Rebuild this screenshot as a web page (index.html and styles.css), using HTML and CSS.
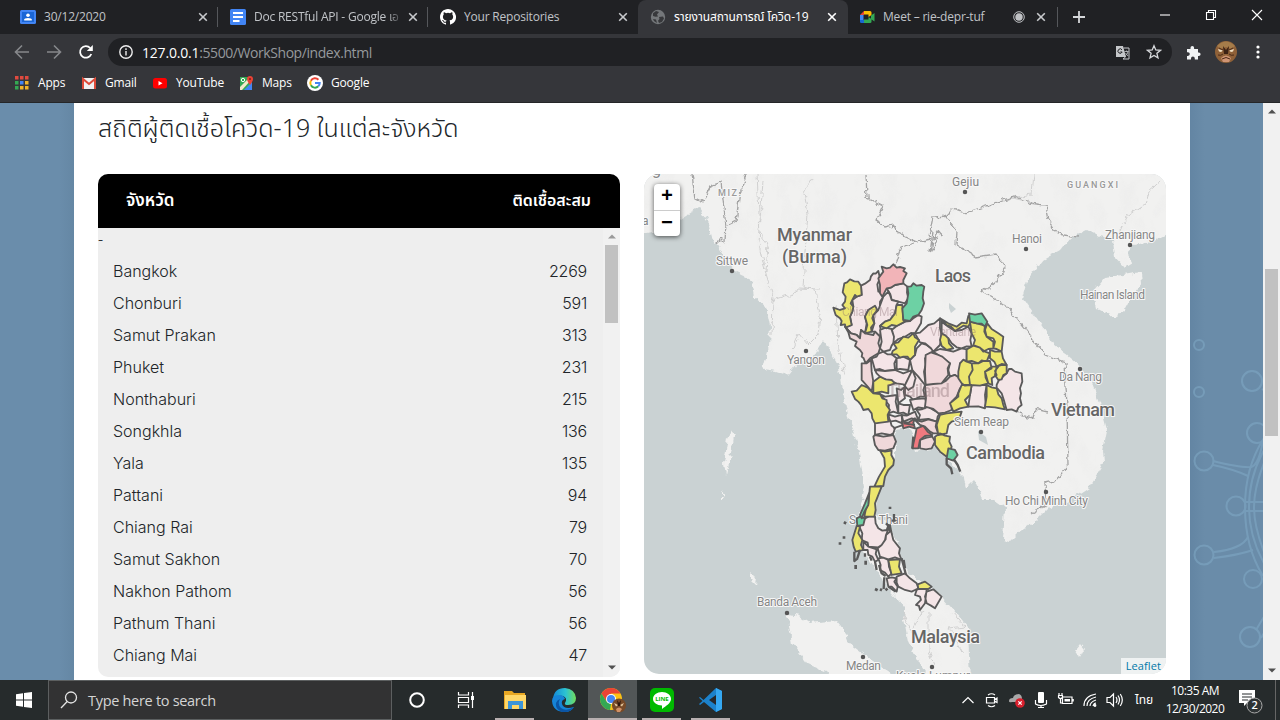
FILE: index.html
```html
<!DOCTYPE html>
<html lang="th">
<head>
<meta charset="utf-8">
<title>รายงานสถานการณ์ โควิด-19</title>
<link rel="stylesheet" href="styles.css">
</head>
<body>
<div class="desktop">
<header class="browser">
  <div class="tabstrip">
    <div class="tab"><svg class="fav" viewBox="0 0 16 16"><rect y="1" width="16" height="14" rx="1.5" fill="#4285f4"/><rect x="2" y="3" width="12" height="10" fill="#1a66d6"/><circle cx="8" cy="6.3" r="1.8" fill="#fff"/><path d="M4.2 11.5v-1q0-1.6 3.8-1.6t3.8 1.6v1z" fill="#fff"/></svg><span class="tab-title">30/12/2020</span><svg class="x" viewBox="0 0 10 10"><path d="M1.2 1.2 8.8 8.8M8.8 1.2 1.2 8.8"/></svg></div>
    <div class="tab"><svg class="fav" viewBox="0 0 16 16"><rect width="16" height="16" rx="1.5" fill="#4285f4"/><path d="M3 4h10M3 8h10M3 12h6.5" stroke="#fff" stroke-width="1.8"/></svg><span class="tab-title fade t2">Doc RESTful API - Google เอ</span><svg class="x" viewBox="0 0 10 10"><path d="M1.2 1.2 8.8 8.8M8.8 1.2 1.2 8.8"/></svg></div>
    <div class="tab no-sep"><svg class="fav" viewBox="0 0 16 16"><path fill="#fff" d="M8 0C3.58 0 0 3.58 0 8c0 3.54 2.29 6.53 5.47 7.59.4.07.55-.17.55-.38v-1.49c-2.01.37-2.53-.49-2.69-.94-.09-.23-.48-.94-.82-1.13-.28-.15-.68-.52-.01-.53.63-.01 1.08.58 1.23.82.72 1.21 1.87.87 2.33.66.07-.52.28-.87.51-1.07-1.78-.2-3.64-.89-3.64-3.95 0-.87.31-1.59.82-2.15-.08-.2-.36-1.02.08-2.12 0 0 .67-.21 2.2.82a7.7 7.7 0 0 1 4 0c1.53-1.04 2.2-.82 2.2-.82.44 1.1.16 1.92.08 2.12.51.56.82 1.27.82 2.15 0 3.07-1.87 3.75-3.65 3.95.29.25.54.73.54 1.48v2.2c0 .21.15.46.55.38A8 8 0 0 0 8 0z"/></svg><span class="tab-title">Your Repositories</span><svg class="x" viewBox="0 0 10 10"><path d="M1.2 1.2 8.8 8.8M8.8 1.2 1.2 8.8"/></svg></div>
    <div class="tab active"><svg class="fav" viewBox="0 0 16 16"><circle cx="8" cy="8" r="7.2" fill="#74777a"/><path d="M3 4.2 6 2l3 1-2 2.5 1 2-2.5.2L3 7zM9 8l4-.5 1 2-2 3.5-3 1-1-2.2 1.5-1.8zM3 10l3 .5 1 3.5-3-2z" fill="#37383b"/></svg><span class="tab-title thai">รายงานสถานการณ์ โควิด-19</span><svg class="x" viewBox="0 0 10 10"><path d="M1.2 1.2 8.8 8.8M8.8 1.2 1.2 8.8"/></svg></div>
    <div class="tab meet"><svg class="fav" viewBox="0 0 16 16"><path d="M1 6 5 2v4z" fill="#ea4335"/><path d="M5 2h6q1.5 0 1.5 1.5V6L9.500 8V5.500H5z" fill="#fbbc04"/><path d="M1 6h3.500v5H1z" fill="#4285f4"/><path d="M1 11h4v3H2.200Q1 14 1 12.800z" fill="#1967d2"/><path d="M5 10.500h4.500V8l3 2v2.700q0 1.300-1.500 1.300H5zM12 6.500l3.500-2.500v8.500L12 10z" fill="#34a853"/></svg><span class="tab-title">Meet – rie-depr-tuf</span><svg class="rec" viewBox="0 0 12 12"><circle cx="6" cy="6" r="5.300" fill="none" stroke="#bfc1c4"/><circle cx="6" cy="6" r="3.700" fill="#bfc1c4"/></svg><svg class="x" viewBox="0 0 10 10"><path d="M1.200 1.200 8.800 8.800M8.800 1.200 1.200 8.800"/></svg></div>
    <svg class="plus" viewBox="0 0 12 12"><path d="M6 0v12M0 6h12"/></svg>
    <div class="winctl">
      <svg viewBox="0 0 12 12"><path d="M1 6h10"/></svg>
      <svg viewBox="0 0 12 12"><path d="M1.500 3.500h7v7h-7zM3.500 3.500v-2h7v7h-2"/></svg>
      <svg viewBox="0 0 12 12"><path d="m1 1 10 10M11 1 1 11"/></svg>
    </div>
  </div>
  <div class="toolbar">
    <svg class="nav dim" viewBox="0 0 16 16"><path d="M15 8H2M8 1.500 1.500 8 8 14.500"/></svg>
    <svg class="nav dim" viewBox="0 0 16 16"><path d="M1 8h13M8 1.500 14.500 8 8 14.500"/></svg>
    <svg class="nav reload" viewBox="0 0 16 16"><path d="M13.300 10A5.800 5.800 0 1 1 12.200 4"/><path d="M14.800 1v6h-6z" class="solid"/></svg>
    <div class="omnibox">
      <svg class="info" viewBox="0 0 14 14"><circle cx="7" cy="7" r="6.200"/><path d="M7 6v4.500M7 3.300v1.600"/></svg>
      <span class="url"><b>127.0.0.1</b>:5500/WorkShop/index.html</span>
      <svg class="translate" viewBox="0 0 15 15"><path d="M1 1h7l3 11H1z" fill="#c5c7ca"/><path d="M8.500 3H14v11H8l2.500-2" fill="none" stroke="#c5c7ca"/><path d="M7 4.800A2.200 2.200 0 1 0 7.200 7H5.300" fill="none" stroke="#202124"/><path d="M9.500 6.500h4M11.500 5.500v1M13 6.500q-.5 3-2.500 4M10.500 8l2.500 3" fill="none" stroke="#c5c7ca" stroke-width=".8"/></svg>
      <svg class="star" viewBox="0 0 16 16"><path d="m8 1.700 1.800 4.200 4.700.4-3.600 3 1.100 4.600-4-2.500-4 2.500 1.100-4.600-3.600-3 4.700-.4z"/></svg>
    </div>
    <svg class="puzzle" viewBox="0 0 15 15"><path d="M1 4h3.500V2.800a1.800 1.800 0 0 1 3.600 0V4H12v3.500h.8a1.800 1.800 0 0 1 0 3.600H12V14.500H8.800v-1a1.900 1.900 0 0 0-3.800 0v1H1v-3.600h1a1.800 1.800 0 0 0 0-3.600H1z"/></svg>
    <svg class="avatar" viewBox="0 0 22 22"><circle cx="11" cy="11" r="11" fill="#8f6138"/><path d="M2 5q9-9 18 0l-4 3-5-2-5 2z" fill="#a57c4a"/><path d="m8 5 3 4 3-4-1 8H9z" fill="#3b2114"/><path d="m3 8 5 1.500-2 1.500-2-.5zM19 8l-5 1.500 2 1.500 2-.5z" fill="#f0dfc2"/><path d="M6 17q5-5 10 0l-2 4H8z" fill="#cf9474"/><path d="M7 18q4-3 8 0M3 14q3 1 5-1M19 14q-3 1-5-1M4 7l4 2M18 7l-4 2" stroke="#4c2a18" fill="none"/></svg>
    <svg class="dots" viewBox="0 0 4 14"><circle cx="2" cy="2" r="1.600"/><circle cx="2" cy="7" r="1.600"/><circle cx="2" cy="12" r="1.600"/></svg>
  </div>
  <nav class="bookmarks">
    <span class="bm apps"><svg viewBox="0 0 14 14"><path d="M0 0h3.500v3.500H0zM5 0h3.500v3.500H5zM10 0h3.500v3.500H10z" fill="#e04a3f"/><path d="M0 5h3.500v3.500H0z" fill="#34a853"/><path d="M5 5h3.500v3.500H5z" fill="#4285f4"/><path d="M10 5h3.500v3.500H10zM5 10h3.500v3.500H5zM10 10h3.500v3.500H10z" fill="#f0b42a"/><path d="M0 10h3.500v3.500H0z" fill="#34a853"/></svg>Apps</span>
    <span class="bm gmail"><svg viewBox="0 0 14 14"><rect y="2" width="14" height="11" rx="1" fill="#f1f1f1"/><path d="M1 13V3l6 5 6-5v10" fill="none" stroke="#dd4b39" stroke-width="2"/></svg>Gmail</span>
    <span class="bm yt"><svg viewBox="0 0 14 14"><rect y="2" width="14" height="10.500" rx="2.500" fill="#f00"/><path d="m5.500 5 4 2.200-4 2.200z" fill="#fff"/></svg>YouTube</span>
    <span class="bm maps"><svg viewBox="0 0 14 14"><path d="M1 1h12v13H1z" fill="#34a853"/><path d="M5 14 13 6v8z" fill="#4285f4"/><path d="M1 11 10 2l2 2L3 14H1z" fill="#f3e9c9"/><circle cx="4" cy="4" r="1.700" fill="none" stroke="#fff"/><path d="M11 0a3 3 0 0 1 3 3q0 2-3 6-3-4-3-6a3 3 0 0 1 3-3z" fill="#ea4335"/><circle cx="11" cy="3" r="1" fill="#7d1d18"/></svg>Maps</span>
    <span class="bm google"><svg viewBox="0 0 16 16"><circle cx="8" cy="8" r="8" fill="#fff"/><g fill="none" stroke-width="2"><path d="M3.900 5.700A4.700 4.700 0 0 1 11.400 4.700" stroke="#ea4335"/><path d="M3.900 5.700a4.700 4.700 0 0 0 0 4.600" stroke="#fbbc05"/><path d="M3.900 10.300a4.700 4.700 0 0 0 7.400 1" stroke="#34a853"/><path d="M11.300 11.300Q12.700 10 12.700 8H8" stroke="#4285f4"/></g></svg>Google</span>
  </nav>
</header>

<main class="viewport">
  <div class="gutter left"></div>
  <section class="container">
    <h1>สถิติผู้ติดเชื้อโควิด-19 ในแต่ละจังหวัด</h1>
    <div class="columns">
      <div class="panel">
        <div class="thead"><span class="province">จังหวัด</span><span>ติดเชื้อสะสม</span></div>
        <div class="tbody">
          <div class="rows"><div class="dash">-</div>
            <div class="row"><span>Bangkok</span><span>2269</span></div>
            <div class="row"><span>Chonburi</span><span>591</span></div>
            <div class="row"><span>Samut Prakan</span><span>313</span></div>
            <div class="row"><span>Phuket</span><span>231</span></div>
            <div class="row"><span>Nonthaburi</span><span>215</span></div>
            <div class="row"><span>Songkhla</span><span>136</span></div>
            <div class="row"><span>Yala</span><span>135</span></div>
            <div class="row"><span>Pattani</span><span>94</span></div>
            <div class="row"><span>Chiang Rai</span><span>79</span></div>
            <div class="row"><span>Samut Sakhon</span><span>70</span></div>
            <div class="row"><span>Nakhon Pathom</span><span>56</span></div>
            <div class="row"><span>Pathum Thani</span><span>56</span></div>
            <div class="row"><span>Chiang Mai</span><span>47</span></div>
          </div>
          <div class="inner-scroll"><svg viewBox="0 0 8 5"><path d="M0 4.500 4 .5l4 4z" fill="#999"/></svg><i class="thumb"></i><svg class="down" viewBox="0 0 8 5"><path d="m0 .5 4 4 4-4z" fill="#505050"/></svg></div>
        </div>
      </div>
      <div class="map">
        <svg class="mapsvg" viewBox="644 174 522 500">
          <defs>
            <filter id="rough" x="-2%" y="-2%" width="104%" height="104%"><feTurbulence type="fractalNoise" baseFrequency=".16" numOctaves="2" seed="4"/><feDisplacementMap in="SourceGraphic" scale="7" xChannelSelector="R" yChannelSelector="G"/></filter>
            <filter id="relief" x="0" y="0" width="100%" height="100%"><feTurbulence type="fractalNoise" baseFrequency=".05 .03" numOctaves="4" seed="2"/><feColorMatrix values="0 0 0 0 .75  0 0 0 0 .75  0 0 0 0 .75  1.600 0 0 0 -.75"/><feComposite in2="SourceGraphic" operator="in"/></filter>
            <path id="land" d="M634 164V236L664 231 684 217 699 207 707 220 712 237 724 257 736 273 751 280 754 297 766 307 770 327 769 347 763 369 775 371 787 375 797 363 811 362 818 350 824 340 831 353 839 367 844 397 849 420 853 428 859 453 865 487 859 513 855 537 871 563 887 587 904 607 904 620 908 640 916 657 932 684H970L968 627 956 613 942 597 924 583 908 573 902 560 898 543 889 525 877 517 876 500 881 487 887 470 895 457 895 440 894 430 908 428 913 433 916 452 936 448 948 460 964 477 966 488 974 480 979 487 983 500 995 500 1005 507 1003 540 1009 542 1018 533 1033 523 1048 508 1070 500 1090 487 1104 463 1103 450 1107 430 1100 403 1092 383 1077 363 1053 343 1038 320 1022 298 1027 280 1043 260 1060 250 1070 238 1087 230 1100 237 1113 240 1115 257 1125 268 1133 263 1127 252 1133 245 1153 242 1176 230V164z"/>
            <path id="isles" d="m1093 291 12-14 18-2 18-3 1 12-11 14-7 13-10 6-17-9zM787 613l12 3 11 7 26-3 9 11 5 13 12 9 12 9 17 12 7 10h-63l-10-12-18-8-15-20zM732 430l2 7-4 22-4 16-2-12 4-25zM722 490l2 6-2 4zM751 573l5 5-1 6-4-4zM1080 644l4 5-4 8-5-7z"/>
          </defs>
          <rect x="644" y="174" width="522" height="500" fill="#cad2d3"/>
          <g filter="url(#rough)"><use href="#land" fill="#f1f1f0"/><use href="#isles" fill="#f1f1f0"/></g>
          <use href="#land" filter="url(#relief)" opacity=".3"/>
          <g class="border" filter="url(#rough)">
            <path d="M692 174l3 24 8 4 9-17 9-3 5 44 10-5 4-30 6-12-2-8M726 224l-1 17M716 244l5-5 4 4M866 174l1 24 16 8-7 15 9 6 9-2 5 9 18 8 16-3 5-8 4 5M933 231l-3 22 7-15-8-2 4-19 13-1 7-7 12 4 30-10 20-7 14 7 17 2 3 15 9 14 20 3M944 214l13 17-1 14 20 12 20-3 9 14-10 14-12 10 24 15 20 24 18 24 20 8 2 45 1 58-13 15-10 2 1 22-15 8M1015 408l8 8 10 2 2-9 13 3M895 265l6-18 14-4"/>
          </g>
          <g class="border faint" filter="url(#rough)">
            <path d="M812 178l-8 15 4 20-3 40-2 34 12 3 5 25-2 20-10 10-9-11-6 15M763 181l-2 26-3 35 6 25 9 30-1 39M772 300l23-7 3-5 21 1M757 174l3 60 8 10-2 28M836 305l2 40 7 30M1033 174l-2 20-18 4 20 5M1160 181l-10 8-5 15-18 12-8 17M903 612l8 20 6-12 6-9M929 611v40l6 14M952 612l12 14-15 2 14 25"/>
          </g>
          <path d="m949 303 7 6-5 4-2-5zM978 431l8 6 2 8-9-5zM1009 326l5 4" fill="#cad2d3"/>
          <g class="labels"><text x="849" y="524" textLength="59">Surat Thani</text></g>
          <g class="prov" transform="translate(825 255) scale(.3333)">
            <g class="pink">
              <path d="M108 92 120 86 135 75 138 64 145 55 152 56 160 48 165 70 157 88 160 110 168 112 175 125 165 140 165 165 160 190 150 155 130 165 120 185 125 205 120 235 108 225 105 250 95 240 78 235 60 215 80 210 75 185 82 170 85 155 82 135 95 125 110 120z"/>
              <path d="M185 100 197 98 210 90 235 85 247 95 246 113 250 130 240 145 220 140 200 135 196 118z"/>
              <path d="M175 125 190 110 195 120 200 135 220 140 215 150 210 175 195 195 180 200 165 213 168 228 165 245 150 230 140 230 148 205 145 180 160 165z"/>
              <path d="M240 200 255 198 265 190 280 180 290 185 288 205 280 218 270 235 258 234 240 245 220 252 205 265 207 245 200 225 215 213zM165 225 182 218 200 222 207 245 205 265 200 272 195 285 175 290 165 280 170 260z"/>
              <path d="M140 310 155 305 160 296 175 290 187 298 200 298 215 310 208 325 210 345 180 348 165 342 150 345zM215 310 235 305 255 315 250 345 225 342 215 345zM255 315 262 303 270 300 275 280 290 265 305 270 325 285 315 300 300 310 302 330 297 350 302 390 285 392 270 390 272 370 262 345z"/>
              <path d="M270 235 285 233 310 210 328 205 345 190 345 220 350 240 345 270 325 290 318 280 300 265 285 262z"/>
              <path d="M350 200 370 215 390 228 410 225 430 215 440 235 436 255 440 275 425 274 410 280 395 277 380 265 370 250 350 240zM325 290 345 282 365 285 385 290 410 280 425 283 425 315 405 325 410 345 405 370 390 360 375 365 370 345 375 325 360 315 340 300z"/>
              <path d="M545 355 552 342 560 342 570 350 590 355 592 380 585 400 588 415 585 430 590 450 580 458 575 470 560 463 545 465 538 440 530 415 515 398 515 390 522 375zM440 390 485 390 480 420 482 445 480 460 460 454 430 455 435 420z"/>
              <path d="M150 345 180 348 210 345 235 355 262 345 272 370 270 375 265 395 250 405 235 388 215 385 185 375 170 370 155 355zM262 345 280 365 300 390 295 405 300 425 285 425 265 435 255 425 240 420 240 390z"/>
              <path d="M165 417 180 425 215 420 212 440 220 475 205 470 190 475 192 450zM220 445 235 450 255 450 250 480 235 473 220 475zM215 400 228 405 240 395 236 410 240 430 220 445zM255 435 270 432 300 430 305 445 300 460 280 457 265 465zM275 465 290 463 310 455 325 465 345 475 338 485 335 500 310 492 280 495 285 480zM190 478 210 485 230 480 232 505 212 497 195 500zM230 480 245 482 270 470 280 495 260 490 235 500zM150 505 170 498 195 495 200 512 210 520 205 535 195 540 170 535 150 540z"/>
            </g>
            <g class="rose">
              <path d="M60 215 78 235 95 240 105 250 108 225 120 235 145 240 150 230 165 245 160 265 165 280 160 295 135 310 122 325 116 310 110 305 112 295 105 285 90 273 95 260 75 250 70 232zM110 325 125 325 138 315 140 350 145 380 140 410 128 395 110 375z"/>
              <path d="M302 300 318 292 340 300 352 305 375 325 368 340 370 360 360 372 350 385 325 387 302 390 300 350zM300 390 325 387 350 385 362 378 375 365 390 360 405 370 415 390 405 400 395 425 380 440 380 465 360 473 340 475 325 462 300 455 303 430z"/>
              <path d="M270 495 290 500 310 493 335 500 332 515 340 535 325 535 315 530 300 515 285 510zM145 545 150 540 175 545 205 540 213 560 205 580 180 587 160 585 150 570zM285 555 305 548 322 545 330 560 320 580 303 583 285 580z"/>
            </g>
            <g class="yellow">
              <path d="M58 85 66 82 75 73 88 79 100 80 108 92 110 120 95 125 90 120 82 135 77 145 85 155 82 170 75 185 80 210 62 218 60 208 47 210 50 198 45 190 32 180 25 158 45 165 60 160 52 150 60 140 62 125 53 112zM120 185 130 165 150 152 157 165 145 180 142 190 148 205 138 218 140 230 120 235 127 210zM215 150 232 150 235 195 240 200 215 213 200 210 185 220 165 213 180 200 195 195 210 175z"/>
              <path d="M205 265 220 262 235 245 250 248 265 235 270 247 282 255 270 275 270 300 255 315 248 305 235 305 225 308 215 298 200 298 203 288 215 280zM345 190 370 205 395 215 410 203 425 205 430 183 440 195 430 215 415 212 390 228 378 215 365 210zM350 235 362 242 370 250 372 265 385 280 365 285 350 273 345 255z"/>
              <path d="M435 200 458 206 480 212 478 230 485 245 505 260 505 280 490 282 475 290 465 278 445 270 450 255 440 235zM487 205 500 222 520 235 535 245 530 290 515 282 505 280 510 260 505 250 485 245 480 225zM425 283 445 272 465 278 480 290 495 295 485 320 470 316 460 325 440 318 425 320zM495 285 510 290 530 290 534 310 545 330 530 327 515 335 508 320 495 310z"/>
              <path d="M405 325 415 314 425 320 440 325 443 345 432 365 435 390 420 392 410 385 400 370 400 350zM440 325 460 325 475 318 495 318 500 340 480 350 482 368 490 385 465 392 435 390 432 365 443 345zM480 350 500 335 520 335 510 348 515 360 500 370 502 390 490 385zM515 335 530 330 545 330 545 355 535 360 530 373 520 375 510 360zM410 390 440 390 435 420 420 435 430 455 405 460 385 470 375 445 400 425 400 415zM485 390 500 397 515 400 520 418 530 430 535 450 540 463 510 457 480 455 485 425z"/>
              <path d="M80 410 95 407 110 390 128 398 145 415 165 417 172 430 185 435 184 450 195 465 188 480 190 500 150 505 142 490 140 475 130 462 115 465 108 450 100 440 90 432zM145 380 165 365 182 373 200 375 210 385 190 392 190 415 170 410 145 415zM345 480 365 475 410 470 405 485 400 495 380 500 370 510 365 535 340 540 335 510zM330 545 345 535 360 542 375 545 373 560 380 575 375 590 365 605 345 590 330 570zM165 587 180 590 200 587 199 600 207 615 205 630 190 645 180 665 175 693 148 695 162 665 180 635 178 610z"/>
            </g>
            <path class="salmon" d="M160 70 175 50 170 35 185 40 195 38 205 28 215 38 225 36 240 40 235 48 245 55 235 75 235 85 210 90 197 98 185 100 172 125 165 115 165 90z"/>
            <g class="red"><path d="M230 500 250 503 270 490 265 503 270 520 252 515 235 520zM275 520 295 513 308 530 322 540 300 543 285 555 280 580 262 580 270 545z"/><path d="M205 520 235 510M235 505 270 510"/></g>
            <path class="green" d="M247 95 258 94 265 85 275 92 290 90 298 95 295 110 293 130 297 145 290 165 280 180 265 185 255 198 235 195 232 160 245 145 250 115zM432 175 450 179 470 175 487 200 480 215 470 206 455 205 435 200zM370 580 390 585 398 600 385 617 365 610z"/>
            <path d="M365 610 365 628 378 640 382 658M388 615 398 630 406 650M265 545 262 580" fill="none" stroke-width="7"/>
            <g transform="translate(0 705)">
              <path class="pink" d="M120 85 135 78 150 80 152 100 160 115 172 122 185 120 190 105 195 125 183 135 182 148 170 165 160 172 130 170 128 158 110 150 112 130 103 110zM195 105 200 130 205 150 225 175 222 190 230 210 210 202 190 208 165 200 158 175 170 165 180 150 183 135zM115 155 130 170 155 178 152 192 160 210 150 215 142 200 130 195 128 180 115 180zM160 205 175 203 190 210 192 230 200 250 190 260 180 248 165 240 167 225zM215 260 240 250 255 265 275 280 280 295 270 300 260 305 240 300 220 290 215 278zM185 265 200 262 215 265 208 275 218 290 215 305 200 290 190 290zM275 300 290 292 305 298 303 315 300 340 285 360 282 348 273 345 288 330 285 320 270 315zM305 305 325 298 350 320 330 355 318 347 305 340 300 320z"/>
              <path class="yellow" d="M135-10 170-10 158 20 150 40 152 60 148 80 118 80 122 60 130 40zM95 108 105 110 100 130 112 150 108 165 115 180 92 185 86 170 82 150zM190 210 225 208 222 230 230 250 200 255 195 235zM278 283 300 275 320 290 310 297 280 297z"/>
              <path class="green" d="M132 10 130 45 118 65 110 85 105 75 120 40zM95 85 105 80 120 85 115 105 97 108z"/>
              <path d="M230 205 243 255M236 210 240 235M88 185v28l10-8M105 180l-8 25M120 190v10M135 200l5 12M150 215l5 25M162 225l8 25 12 8M178 262l-2 35M190 290l22 15M207 72v20M200 92h12M183 100l10 10" fill="none" stroke-width="7"/>
              <path d="M195 50v7M62 95l-4 7M57 139v7M45 157v7M92 225v12M122 212v12M150 297l8 4M165 298l6 3M182 295l5 6" stroke-width="8"/>
            </g>
          </g>
          <g class="labels over"><text x="842" y="316" textLength="56">Chiang Mai</text><text x="930" y="336" textLength="46">Vientiane</text><text x="887" y="397" class="country" textLength="63">Thailand</text></g>
          <g class="labels">
            <text x="652" y="175" class="big">g</text><text x="642" y="225">a</text>
            <text x="718" y="196" class="state" textLength="23">MIZ.</text><text x="716" y="265" textLength="32">Sittwe</text><text x="787" y="364" textLength="38">Yangon</text>
            <text x="952" y="186" textLength="27">Gejiu</text><text x="1067" y="188" class="state" textLength="51">GUANGXI</text><text x="1012" y="243" textLength="30">Hanoi</text><text x="1105" y="239" textLength="50">Zhanjiang</text><text x="1080" y="299" textLength="65">Hainan Island</text><text x="1059" y="381" textLength="43">Da Nang</text><text x="954" y="426" textLength="55">Siem Reap</text><text x="1005" y="505" textLength="83">Ho Chi Minh City</text><text x="757" y="606" textLength="60">Banda Aceh</text><text x="846" y="670" textLength="35">Medan</text><text x="896" y="680" textLength="74">Kuala Lumpur</text>
            <g class="country"><text x="777" y="241" textLength="75">Myanmar</text><text x="782" y="263" textLength="65">(Burma)</text><text x="935" y="282" textLength="36">Laos</text><text x="1051" y="416" textLength="64">Vietnam</text><text x="966" y="459" textLength="79">Cambodia</text><text x="911" y="643" textLength="69">Malaysia</text></g>
          </g>
          <path class="cities" d="M732 271h0M806 351h0M965 192h0M1026 249h0M1130 245h0M1080 369h0M981 432h0M1046 492h0M787 613h0M863 657h0M932 667h0"/>
        </svg>
        <div class="zoom"><span>+</span><span>−</span></div>
        <div class="attribution">Leaflet</div>
      </div>
    </div>
  </section>
  <div class="gutter right">
    <svg class="virus" viewBox="1190 103 73 577"><circle cx="1199" cy="345" r="5"/><circle cx="1199" cy="392" r="5"/><circle cx="1252" cy="381" r="10"/><circle cx="1257" cy="433" r="10"/><circle cx="1204" cy="461" r="9.500"/><circle cx="1236" cy="506" r="9.500"/><circle cx="1204" cy="555" r="9.500"/><circle cx="1253" cy="579" r="9"/><circle cx="1250" cy="637" r="10"/><path d="M1262 389q8 5 5 14M1263 440q-4 25-12 27-10 1-38-6M1213 465q20 4 35 11M1245 502h18M1245 511h18M1214 552q28-3 34-15M1214 558q25-3 39-8M1264 580v-14M1256 630l9-15M1261 638l8-13"/><path d="M1264 438q-19 29-19 69t18 69M1264 450q-15 27-15 57t16 58M1264 463q-10 25-10 44t10 45"/></svg>
  </div>
  <div class="page-scroll"><svg viewBox="0 0 8 5"><path d="M0 4.500 4 .5l4 4z"/></svg><i class="thumb"></i><svg class="down" viewBox="0 0 8 5"><path d="m0 .5 4 4 4-4z"/></svg></div>
</main>

<footer class="taskbar">
  <div class="start"><svg viewBox="0 0 16 16"><path d="m0 2.200 7-1v6.300H0zM8 1l8-1v7.500H8zM0 8.500h7v6.300l-7-1zM8 8.500h8V16l-8-1z" fill="#fff"/></svg></div>
  <div class="search"><svg viewBox="0 0 18 18"><circle cx="11" cy="6.500" r="5.500"/><path d="M7.200 10.500 1 17"/></svg><span>Type here to search</span></div>
  <div class="task"><svg viewBox="0 0 24 24"><circle cx="12" cy="12" r="6.800" fill="none" stroke="#fff" stroke-width="2"/></svg></div>
  <div class="task"><svg viewBox="0 0 24 24" fill="none" stroke="#fff" stroke-width="1.200"><path d="M4.500 4v3h10V4M4.500 20v-3h10v3M4.500 9.500h10v5h-10zM18.500 4v16"/><path d="M18.500 8v4" stroke-width="3"/></svg></div>
  <div class="task open"><svg viewBox="0 0 24 24"><path d="M1 3h8l2 2h11v16H1z" fill="#e8a722"/><path d="M2 7h21v14H2z" fill="#ffd768"/><path d="M5 21v-8h15v8h-4v-4H9v4z" fill="#3d95d8"/></svg></div>
  <div class="task"><svg viewBox="0 0 24 24"><defs><linearGradient id="edge"><stop stop-color="#1489d8"/><stop offset=".55" stop-color="#2cc3d2"/><stop offset="1" stop-color="#72dc5b"/></linearGradient></defs><path d="M1 11Q2 0 13 0q10 1 11 10 0 7-8 7-4 0-3-2 3-5-2-7-5-1-10 3z" fill="url(#edge)"/><path d="M0 13q0-6 7-6 5 0 6 4-4 1-3 5 2 6 12 3-3 5-9 5-12 0-13-11z" fill="#1684d7"/><path d="M8 11q-3 5 1 9 5 4 13-1-4 6-12 5-7-3-6-9 1-3 4-4z" fill="#0b55a5"/></svg></div>
  <div class="task open selected"><svg viewBox="0 0 26 26"><circle cx="11" cy="12" r="11" fill="#fbc116"/><path d="M1.500 6.500A11 11 0 0 1 20.500 6.500H11l-4.500 8z" fill="#ea4335"/><path d="m1.500 6.500 5 8L11 17l-1 6A11 11 0 0 1 1.500 6.500z" fill="#34a853"/><circle cx="11" cy="12" r="5" fill="#fff"/><circle cx="11" cy="12" r="4" fill="#4285f4"/><circle cx="19" cy="18.500" r="7" fill="#774a28"/><path d="m14 16 4 2-2 1.500zM24 16l-4 2 2 1.500z" fill="#e5caa0"/><path d="M16 22q3-3 6 0l-2 3h-3z" fill="#cf9066"/><path d="m17 13 2 3 2-3-1 6h-2z" fill="#31180e"/></svg></div>
  <div class="task open"><svg viewBox="0 0 24 24"><rect width="24" height="24" rx="5" fill="#00b900"/><path d="M12 4c5 0 9 3 9 7 0 4-5 7-9 10v-3.500c-5 0-9-3-9-6.500 0-4 4-7 9-7z" fill="#fff"/><text x="5.200" y="13.300" font-size="6" font-weight="700" fill="#00b900" textLength="13.500">LINE</text></svg></div>
  <div class="task open"><svg viewBox="0 0 24 24"><path d="M17 0 4.500 12 1 9l-1 .8 3.500 3.200L0 16l1 1 4-3 12 10 6-3V3z" fill="#1c82cc"/><path d="m17 0 6 3v18l-6 3z" fill="#35a8f2"/><path d="M17 7v10l-7-5z" fill="#26282b"/></svg></div>
  <div class="tray">
    <svg class="ic w14" viewBox="0 0 14 16"><path d="m1.500 11 5.500-5.500 5.500 5.500"/></svg>
    <svg class="ic w14" viewBox="0 0 14 16"><path d="M3 3q3.500-2.500 7 0M3 13.500q3.500 2.500 7 0M1.500 5.500h8v5.500h-8zM9.500 7.500l2.500-1.500v4.500L9.500 9"/></svg>
    <svg class="ic w17" viewBox="0 0 17 16"><path d="M1 9q0-3 4-3 1-4 6-4 3 1 3 5l-1 3H4q-3 1-3-1z" fill="#a8a8a8" stroke="none"/><circle cx="12" cy="11" r="4.800" fill="#d8202e" stroke="none"/><path d="m10.300 9.300 3.400 3.400M13.700 9.300l-3.400 3.400"/></svg>
    <svg class="ic w14" viewBox="0 0 14 16"><rect x="4" y="0" width="6" height="11" rx="1" fill="#fff" stroke="none"/><path d="M1.500 8v4q5 3 11 0V8M7 13v3M4 15.500h6"/></svg>
    <svg class="ic w17" viewBox="0 0 17 16"><path d="M5.500 5H15v6.500H5.500zM16.200 7v2.500M1 3.500h5M2 1v2.500M5 1v2.500M1.500 3.500v2q2 2 4 0v-2M3.500 6.500v4.500h2"/><path d="M7.500 7H13v2.500H7.500z" fill="#fff" stroke="none"/></svg>
    <svg class="ic w14" viewBox="0 0 14 16"><path d="M1 14Q1 4 13 2M4 14q0-7 9-9M7 14q0-4 6-6M10 14q1-3 3-3"/><circle cx="12" cy="13.500" r=".8" fill="#fff"/></svg>
    <svg class="ic w17" viewBox="0 0 17 16"><path d="M1 5.500h3L7.500 2v12L4 10.500H1zM10 5q2 3 0 6M12 3.500q3 4.500 0 9M14.300 2q4 6 0 12"/></svg>
    <span class="lang">ไทย</span>
    <span class="clock">10:35 AM<br>12/30/2020</span>
    <svg class="notify" viewBox="0 0 24 24"><path d="M0 0h16v13H8l-3 3v-3H0z" fill="#fff"/><path d="M3 4h10M3 7h10M3 10h6" stroke="#262b2c"/><circle cx="15.500" cy="15.500" r="7.500" fill="#2e3334" stroke="#aaa"/><text x="12.500" y="19.300" font-size="11" font-weight="600" fill="#fff">2</text></svg>
    <i class="peek"></i>
  </div>
</footer>
</div>
</body>
</html>
```

FILE: styles.css
```css
* { box-sizing: border-box; }
body { margin: 0; overflow: hidden; font-family: "Open Sans", "Noto Sans Thai", "Noto Sans", sans-serif; }
svg { display: block; flex: none; }
.desktop { width: 1280px; height: 720px; display: flex; flex-direction: column; overflow: hidden; }

.browser { height: 103px; background: #35363a; border-bottom: 1px solid #252628; color: #fff; }
.tabstrip { height: 34px; background: #202124; display: flex; align-items: center; padding-left: 8px; }
.tab { width: 210px; height: 34px; padding: 0 10px 0 12px; display: flex; align-items: center; position: relative; font-size: 12px; letter-spacing: -.2px; color: #c1c4c8; }
.tab::after { content: ""; position: absolute; right: 0; top: 7px; height: 20px; width: 1px; background: #55575b; }
.tab.no-sep::after, .tab.active::after { display: none; }
.tab.active { background: #35363a; border-radius: 8px 8px 0 0; color: #fff; padding-right: 11px; }
.tab.meet { padding: 0 12px 0 11px; }
.fav { width: 16px; height: 16px; margin-right: 8px; }
.tab-title { flex: 1; overflow: hidden; white-space: nowrap; line-height: 24px; }
.tab-title.thai { font-size: 12px; letter-spacing: -.1px; }
.tab-title.t2 { letter-spacing: -.22px; margin-right: 4px; }
.fade { -webkit-mask-image: linear-gradient(90deg, #000 88%, transparent); mask-image: linear-gradient(90deg, #000 88%, transparent); }
.x { width: 10px; height: 10px; fill: none; stroke: #c8cacd; stroke-width: 1.600; }
.active .x { stroke: #fff; }
.rec { width: 12px; height: 12px; margin-right: 11px; }
.plus { width: 12px; height: 12px; margin-left: 15px; stroke: #d5d7da; stroke-width: 1.800; }
.winctl { margin-left: auto; padding: 0 17px 4px 0; display: flex; gap: 34px; }
.winctl svg { width: 12px; height: 12px; fill: none; stroke: #fff; stroke-width: 1.100; }
.toolbar { height: 36px; display: flex; align-items: center; padding: 0 20px 0 14px; }
.nav { width: 16px; height: 16px; margin-right: 16px; fill: none; stroke: #fff; stroke-width: 1.800; }
.nav.dim { stroke: #86888b; stroke-width: 1.600; }
.nav.reload { margin-right: 14px; }
.nav .solid { fill: #fff; stroke: none; }
.omnibox { width: 1064px; height: 28px; border-radius: 14px; background: #202124; display: flex; align-items: center; padding: 0 10px 0 11px; }
.info { width: 14px; height: 14px; fill: none; stroke: #eee; stroke-width: 1.400; }
.url { flex: 1; margin-left: 9px; color: #96999d; font-size: 14px; letter-spacing: -.43px; }
.url b { color: #fff; font-weight: 400; letter-spacing: -.2px; }
.translate { width: 15px; height: 15px; margin-right: 16px; }
.star { width: 16px; height: 16px; fill: none; stroke: #d7d9dc; stroke-width: 1.300; }
.puzzle { width: 15px; height: 15px; margin-left: 14px; fill: #f1f3f4; }
.avatar { width: 22px; height: 22px; margin-left: 14px; }
.dots { width: 4px; height: 14px; margin-left: 19px; fill: #fff; }
.bookmarks { height: 28px; display: flex; align-items: center; padding-left: 15px; }
.bm { display: flex; align-items: center; font-size: 12px; letter-spacing: -.2px; white-space: nowrap; line-height: 26px; margin-top: -2px; }
.bm svg { width: 14px; height: 14px; margin-right: 9px; }
.apps { width: 67px; }
.gmail { width: 71px; }
.yt { width: 86px; }
.maps { width: 68px; }
.google svg { width: 16px; height: 16px; margin-right: 8px; }

.viewport { height: 577px; display: flex; background: #6a8ba8; overflow: hidden; }
.gutter.left { width: 74px; background: linear-gradient(90deg, #6a8dab 80%, #6587a4); }
.gutter.right { width: 73px; background: linear-gradient(90deg, #6385a3, #6a8ca9 20%); }
.virus { width: 73px; height: 577px; fill: none; stroke: #83adc9; stroke-width: 2; opacity: .5; }
.container { width: 1116px; background: #fff; padding: 0 24px; }
h1 { margin: 0; height: 71px; padding-top: 8px; font: 300 25px/36px "Noto Sans Thai", "Noto Sans", "Open Sans", sans-serif; color: #212529; white-space: nowrap; }
.columns { display: flex; gap: 24px; }
.panel { width: 522px; height: 503px; border-radius: 10px; background: #eee; overflow: hidden; color: #212529; }
.thead { height: 54px; padding: 0 29px 0 28px; background: #000; color: #fff; font-weight: 600; font-size: 16px; display: flex; align-items: center; justify-content: space-between; }
.province { font-size: 17px; }
.tbody { display: flex; height: 449px; }
.rows { flex: 1; font: 300 16px/32px "Noto Sans", "Open Sans", sans-serif; }
.dash { height: 27px; line-height: 22px; }
.row { display: flex; justify-content: space-between; padding: 0 16px 0 15px; height: 32px; font-family: Inter, sans-serif; font-size: 16px; }
.row span:last-child { letter-spacing: -.2px; }
.inner-scroll { width: 17px; background: #f1f1f1; display: flex; flex-direction: column; align-items: center; padding-top: 6px; }
.inner-scroll svg, .page-scroll svg { width: 8px; height: 5px; }
.inner-scroll .thumb { width: 13px; height: 78px; margin-top: 6px; background: #c1c1c1; }
.inner-scroll .down { margin-top: auto; margin-bottom: 7px; }
.page-scroll { width: 17px; background: #f1f1f1; display: flex; flex-direction: column; align-items: center; padding: 6px 0 7px; fill: #505050; }
.page-scroll .thumb { width: 13px; height: 167px; margin-top: 155px; background: #c1c1c1; }
.page-scroll .down { margin-top: auto; }

.map { width: 522px; height: 500px; border-radius: 15px; overflow: hidden; position: relative; }
.mapsvg { width: 522px; height: 500px; }
.border { fill: none; stroke: #a3a3a3; stroke-width: 1.300; }
.border.faint { stroke: #d0d0d0; stroke-width: 1; }
.prov { stroke: #5a5a5a; stroke-width: 5.500; stroke-linejoin: round; }
.pink { fill: #f4e5e7; }
.rose { fill: #f0d8da; }
.yellow { fill: #ece66e; }
.salmon { fill: #f2b4b8; }
.red { fill: #f0797f; }
.green { fill: #6dd1a4; }
.labels text { font: 12px Roboto, sans-serif; fill: #858585; stroke: #f7f7f7; stroke-width: 2px; stroke-linejoin: round; paint-order: stroke; }
.labels .country text, .labels text.country { font-size: 18px; font-weight: 500; fill: #666; }
.labels text.state { font-size: 9px; font-weight: 500; fill: #999; }
.labels text.big { font-size: 16px; }
.over { opacity: .35; }
.labels.over text { stroke: none; fill: #80666b; }
.cities { stroke: #555; stroke-width: 4.500; stroke-linecap: round; }
.zoom { position: absolute; left: 10px; top: 10px; width: 26px; height: 52px; background: #fff; border-radius: 4px; box-shadow: 0 1px 5px rgba(0,0,0,.65); display: flex; flex-direction: column; }
.zoom span { height: 26px; text-align: center; font: bold 20px/26px "Liberation Mono", monospace; color: #000; }
.zoom span + span { border-top: 1px solid #ccc; }
.attribution { position: absolute; right: 0; bottom: 0; height: 16px; padding: 0 5px; background: rgba(255,255,255,.7); color: #0078a8; font: 11px/16px "Open Sans", sans-serif; letter-spacing: .1px; }

.taskbar { height: 40px; background: #262b2c; display: flex; color: #fff; }
.start { width: 48px; display: flex; align-items: center; justify-content: center; }
.start svg { width: 16px; height: 16px; }
.search { width: 344px; border: 1px solid #5c5f60; background: #323233; display: flex; align-items: center; padding-left: 11px; color: #d5d5d5; font-size: 14.500px; letter-spacing: -.3px; }
.search svg { width: 18px; height: 18px; margin-right: 10px; fill: none; stroke: #e5e5e5; stroke-width: 1.300; }
.task { width: 49px; display: flex; align-items: center; justify-content: center; position: relative; }
.task svg { width: 24px; height: 24px; }
.task.selected svg { width: 26px; height: 26px; }
.task.open::after { content: ""; position: absolute; left: 5px; right: 5px; bottom: 0; height: 2px; background: #b8afb0; }
.task.selected { background: #525657; }
.task.selected::after { left: 0; right: 0; }
.tray { margin-left: auto; display: flex; align-items: center; }
.ic { height: 16px; fill: none; stroke: #fff; stroke-width: 1.200; margin-right: 9px; }
.w14 { width: 14px; }
.w17 { width: 17px; }
.ic.w14:first-child { margin-right: 10px; }
.lang { width: 19px; margin-left: 3px; font-size: 12px; white-space: nowrap; }
.clock { width: 60px; margin-left: 11px; font-size: 12px; line-height: 18px; letter-spacing: -.5px; text-align: center; white-space: nowrap; }
.notify { width: 24px; height: 24px; margin-left: 14px; margin-top: 4px; }
.peek { width: 1px; height: 40px; margin-left: 12px; margin-right: 4px; background: #666; }
```
